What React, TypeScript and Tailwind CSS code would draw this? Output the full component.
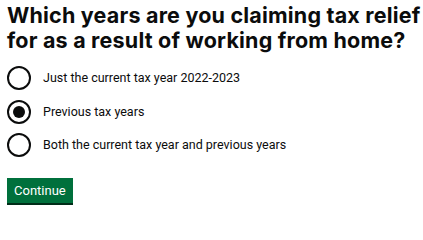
import { useState } from 'react';

const options = [
  'Just the current tax year 2022-2023',
  'Previous tax years',
  'Both the current tax year and previous years',
];

export default function App() {
  const [selected, setSelected] = useState(1);

  return (
    <div className="min-h-screen bg-white pl-[7px] pt-[3px] text-[#0b0c0c]">
      <h1 className="whitespace-nowrap text-[21.5px] font-bold leading-[25px] tracking-[0.2px] font-['Inter',sans-serif]">
        Which years are you claiming tax relief
        <br />
        for as a result of working from home?
      </h1>

      <div className="mt-[13px] flex flex-col gap-[9.5px] font-['Roboto',sans-serif]">
        {options.map((label, i) => (
          <label key={label} className="flex items-center gap-[12px] cursor-pointer" onClick={() => setSelected(i)}>
            <span className="flex h-[24px] w-[24px] shrink-0 items-center justify-center rounded-full border-2 border-[#0b0c0c]">
              {selected === i && <span className="h-[12px] w-[12px] rounded-full bg-[#0b0c0c]" />}
            </span>
            <span className="text-[12.5px] leading-[24px]">{label}</span>
          </label>
        ))}
      </div>

      <button className="mt-[20.5px] h-[25px] bg-[#00703c] px-[7px] text-[13px] leading-[25px] text-white font-['Roboto',sans-serif] shadow-[0_2px_0_#002d18]">
        Continue
      </button>
    </div>
  );
}
